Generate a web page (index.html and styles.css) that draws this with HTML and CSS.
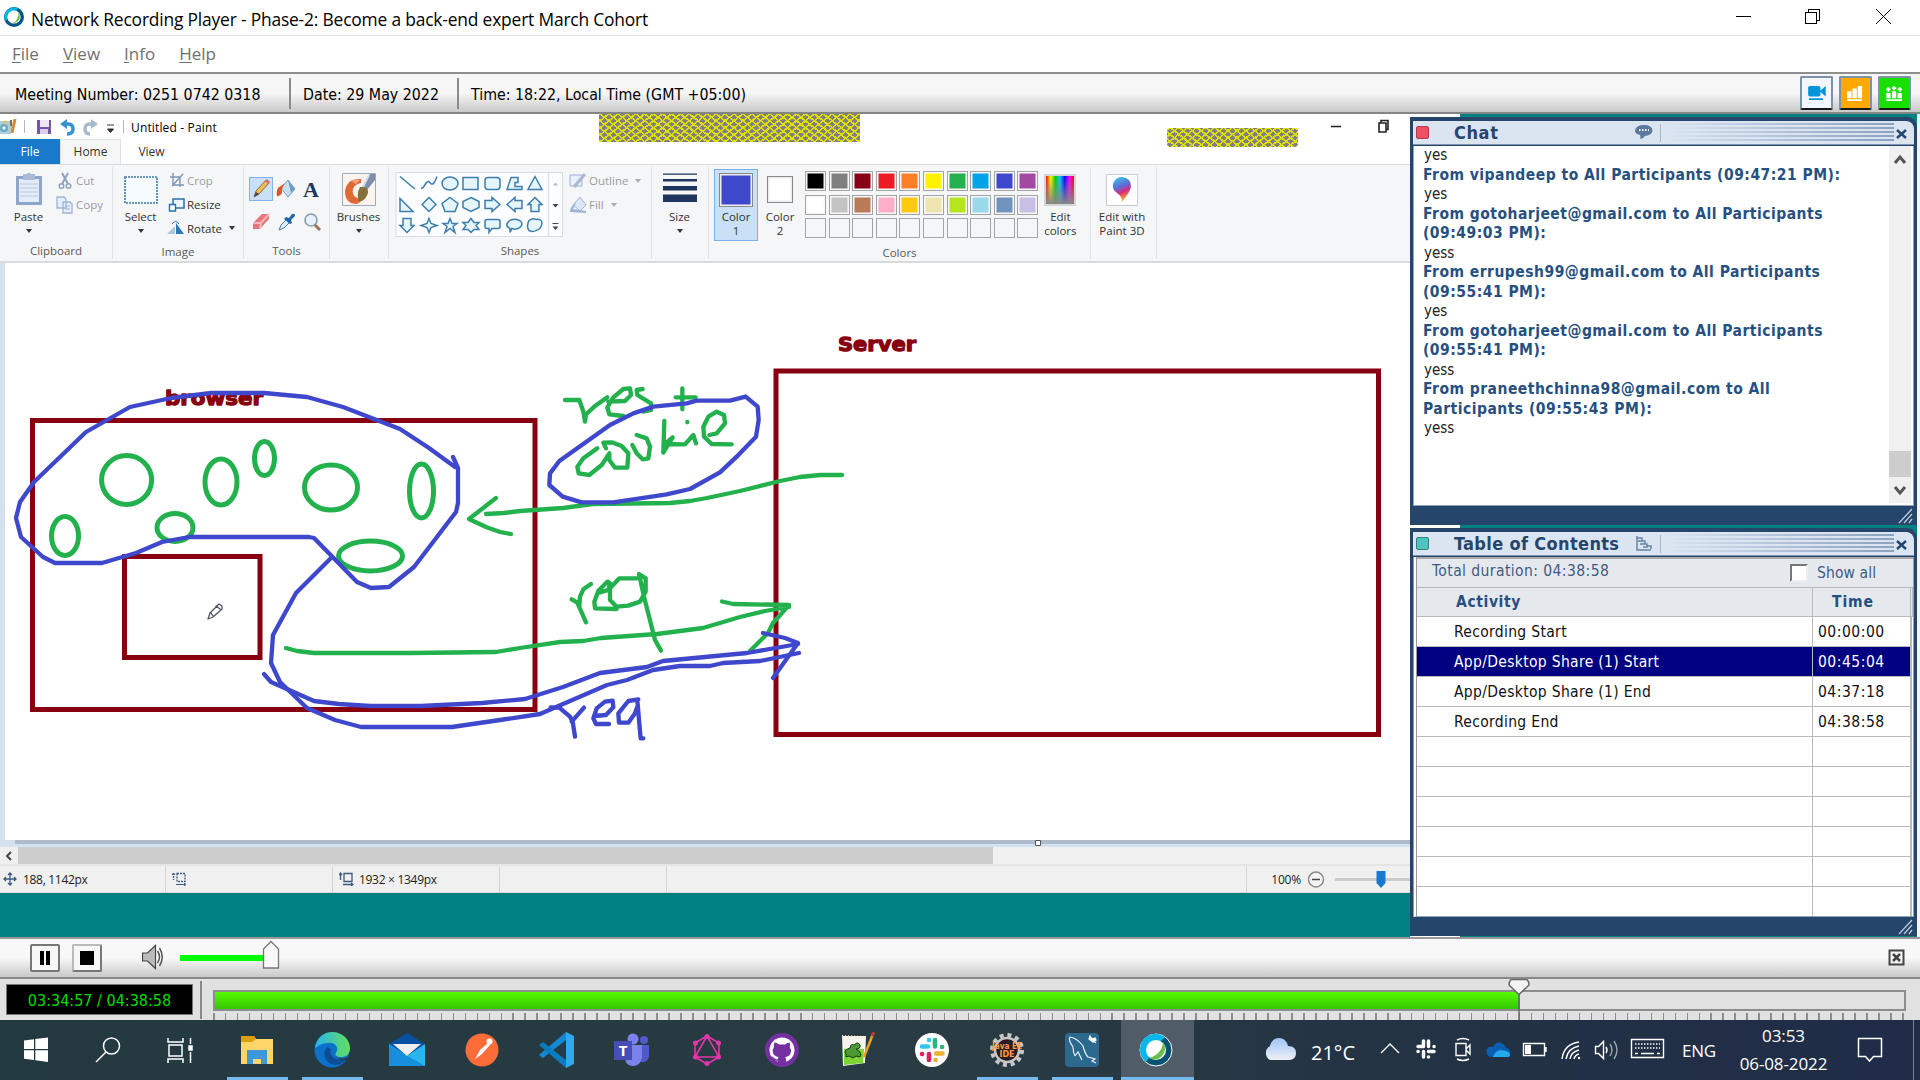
FILE: index.html
```html
<!DOCTYPE html>
<html lang="en">
<head>
<meta charset="utf-8">
<title>Network Recording Player</title>
<link rel="stylesheet" href="styles.css">
</head>
<body>
<header class="titlebar">
  <svg class="app-icon" width="22" height="22" viewBox="0 0 22 22"><circle cx="11" cy="11" r="10" fill="#07568a"/><path d="M2 15A10 10 0 0 1 15 2l-3 6z" fill="#00b6e3"/><circle cx="11" cy="11" r="6.6" fill="#fff"/><path d="M15.5 6c3 4 1 11-6 11.500c4-2 6-6 6-11.500z" fill="#6abf4b"/></svg>
  <span class="title">Network Recording Player - Phase-2: Become a back-end expert March Cohort</span>
  <svg class="win-buttons" width="184" height="35" viewBox="1736 0 184 35" fill="none" stroke="#000" shape-rendering="crispEdges"><path d="M1736 16.500h15M1805.500 12.500h11v11h-11zM1808.500 12v-2.500h11v11h-3"/><path d="M1876 9l15 15M1891 9l-15 15" shape-rendering="auto"/></svg>
</header>
<nav class="menu"><span><u>F</u>ile</span><span><u>V</u>iew</span><span><u>I</u>nfo</span><span><u>H</u>elp</span></nav>
<div class="infobar">
  <span class="info i1">Meeting Number: 0251 0742 0318</span>
  <span class="info i2">Date: 29 May 2022</span>
  <span class="info i3">Time: 18:22, Local Time (GMT +05:00)</span>
  <div class="panel-toggles">
    <svg class="tog cam" width="33" height="34" viewBox="0 0 33 34"><rect x="7" y="9" width="14" height="12" rx="2" fill="#0095d9"/><path d="M20 15l7-6v12zM8 23h16v2H8z" fill="#0095d9"/></svg>
    <svg class="tog bars" width="33" height="34" viewBox="0 0 33 34"><path d="M7 15h5v8H7zM13 12h5v11h-5zM19 9h5v14h-5zM7 24h17v2H7z" fill="#fff"/></svg>
    <svg class="tog people" width="33" height="34" viewBox="0 0 33 34"><path d="M7 17h5v6H7zM13.500 15h5v8h-5zM20 17h5v6h-5zM7 24h18v2H7zM7 12h5v2H7zM8.500 10.500h2v5h-2zM13.500 10.500h5v2h-5zM15 9h2v5h-2zM20 12h5v2h-5zM21.500 10.500h2v5h-2z" fill="#fff"/></svg>
  </div>
</div>

<main class="work">
  <section class="paint">
    <div class="ptitle">
      <svg width="126" height="25" viewBox="0 114 126 25" class="quick">
        <path d="M0 121h10l3 5-2 8H0z" fill="#a9cfdf"/><circle cx="4" cy="128" r="4" fill="#67a8bd"/><circle cx="4" cy="128" r="1.800" fill="#e4f1f5"/><circle cx="5" cy="122.500" r="2" fill="#d4c86a"/><path d="M15 119l-3 14" stroke="#d18b3c" stroke-width="3"/><path d="M11 120v6" stroke="#8a6a4a" stroke-width="2"/>
        <path d="M24.500 120v13M123.500 120v13" stroke="#b8b8b8"/>
        <path d="M37 120h14v14H37z" fill="#7357a5"/><path d="M40 120h9v7h-9z" fill="#eee6f6"/><path d="M40 129h8v5h-8z" fill="#d9cfe8"/>
        <path d="M64 124h4q5 0 5 5t-6 5" fill="none" stroke="#3793cf" stroke-width="3.500"/><path d="M60 124l7-5v10z" fill="#3793cf"/>
        <path d="M94 124h-4q-5 0-5 5t5 5" fill="none" stroke="#a8bacb" stroke-width="3.500"/><path d="M98 124l-7-5v10z" fill="#a8bacb"/>
        <path d="M107 125h7M107.500 129h6l-3 3.500z" fill="#333" stroke="#333" stroke-width="1"/>
      </svg>
      <span class="pname">Untitled - Paint</span>
      <svg class="pwin" width="60" height="20" viewBox="1331 116 60 20" fill="none" stroke="#222" stroke-width="1.600"><path d="M1331 125.500h10M1379 122h7v9h-7zM1381 122v-2.500h7v9h-2"/></svg>
      <i class="hatch big-hatch"></i><i class="hatch small-hatch"></i>
    </div>
    <div class="tabs"><span class="tab file">File</span><span class="tab home">Home</span><span class="tab">View</span></div>
    <div class="ribbon">
      <div class="group g-clip">
        <div class="gbody">
          <div class="big w56"><svg width="28" height="36" viewBox="0 0 28 36"><path d="M1 4h26v29H1z" fill="#8ea6cb"/><path d="M4 7h20v23H4z" fill="#e3ecf8"/><path d="M8 2h4q2-3 4 0h4v6H8z" fill="#a9bbd6"/><path d="M5 12h18M5 16h18M5 20h18M5 24h18" stroke="#b9cbe4"/></svg><b>Paste</b><em></em></div>
          <div class="lines">
            <span class="off"><svg width="20" height="18" viewBox="0 0 20 18"><path d="M6 1l6 11M12 1L6 12" stroke="#8fa3bf" stroke-width="2"/><circle cx="5.500" cy="14" r="2.300" fill="none" stroke="#8fa3bf" stroke-width="1.500"/><circle cx="12.500" cy="14" r="2.300" fill="none" stroke="#8fa3bf" stroke-width="1.500"/></svg>Cut</span>
            <span class="off"><svg width="20" height="18" viewBox="0 0 20 18"><path d="M1 1h7l2 2v9H1zM7 6h7l2 2v9H7z" fill="#e6eefa" stroke="#9db4d6" stroke-width="1.300"/><path d="M9 10h5M9 13h5" stroke="#9db4d6"/></svg>Copy</span>
          </div>
        </div>
        <div class="gname">Clipboard</div>
      </div>
      <div class="group g-image">
        <div class="gbody">
          <div class="big w54"><svg width="34" height="36" viewBox="0 0 34 36"><path d="M1 5h32v26H1z" fill="#f6fbff" stroke="#3678ad" stroke-width="1.600" stroke-dasharray="2 1"/></svg><b>Select</b><em></em></div>
          <div class="lines">
            <span class="off"><svg width="20" height="18" viewBox="0 0 20 18"><path d="M6 1v12h11M3 5h10v10M5 14L16 2" fill="none" stroke="#7f97b5" stroke-width="1.400"/></svg>Crop</span>
            <span><svg width="20" height="18" viewBox="0 0 20 18"><path d="M6 3h11v9H6z" fill="#e9f4fd" stroke="#2b6fae" stroke-width="1.500"/><path d="M2.500 8.500h6V15h-6z" fill="#fff" stroke="#2b6fae" stroke-width="1.400"/></svg>Resize</span>
            <span><svg width="20" height="18" viewBox="0 0 20 18"><path d="M9 15V4l8 11z" fill="#2c79bd"/><path d="M8 15V7L0 15z" fill="#a9c7df"/><path d="M5 5q4-5 7 0" fill="none" stroke="#2c79bd"/></svg>Rotate<em class="side"></em></span>
          </div>
        </div>
        <div class="gname">Image</div>
      </div>
      <div class="group g-tools">
        <div class="gbody tools">
          <svg width="24" height="24" viewBox="0 0 24 24" class="on"><path d="M5 20l2-6L17 3l3 3L10 17z" fill="#f0bd58" stroke="#8d6a34"/><path d="M5 20l2-5 3 2z" fill="#444"/><path d="M16 4l2-2 3 3-2 2z" fill="#d66f70"/></svg>
          <svg width="24" height="24" viewBox="0 0 24 24"><path d="M6 11l7-8 7 9-7 8z" fill="#c6e0f2" stroke="#7d9fbc"/><path d="M13 3l7 9-4 4z" fill="#6d9cc4"/><path d="M2 19q-1-5 1-8l7-5q-4 6-3 10-2 4-5 3z" fill="#d5562f"/></svg>
          <b class="serifA">A</b>
          <svg width="24" height="24" viewBox="0 0 24 24"><path d="M4 13L13 4h7v5l-9 10H4z" fill="#e2777e"/><path d="M4 13h8l8-9M12 13l-1 6" stroke="#f6b7ba" stroke-width="2" fill="none"/></svg>
          <svg width="24" height="24" viewBox="0 0 24 24"><path d="M4 20l2-5 7-7 3 3-7 7z" fill="#d7ebf8" stroke="#557da0"/><path d="M11 7l3 1 3-4q3-1 3 2l-4 4 1 3-2 1-6-5z" fill="#1e67a8"/></svg>
          <svg width="24" height="24" viewBox="0 0 24 24"><circle cx="10" cy="10" r="6" fill="#e6f2fb" stroke="#8d9aaa" stroke-width="1.600"/><path d="M14 15l5 5" stroke="#9c7155" stroke-width="3"/></svg>
        </div>
        <div class="gname">Tools</div>
      </div>
      <div class="group g-brush">
        <div class="gbody"><div class="big w57"><svg width="34" height="36" viewBox="0 0 34 36"><path d="M.5 1.500h33v32H.5z" fill="#fcf5ef" stroke="#9facba"/><path d="M19 7Q5 6 3 19q0 13 12 13l7-5q-13 0-11-10 2-5 8-6z" fill="#e06a32"/><path d="M9 9q6-3 9-1l-4 4z" fill="#f2a27c"/><path d="M28 2h5v6L25 18l-5-3z" fill="#7d8ead"/><path d="M27 3L21 15" stroke="#d5deeb" stroke-width="2"/><path d="M18 15q9-1 8 6-2 7-9 9-3-8 1-15z" fill="#85703c"/></svg><b>Brushes</b><em></em></div></div>
      </div>
      <div class="group g-shapes">
        <div class="gbody">
          <svg class="shapes" width="168" height="65" viewBox="395 171.500 168 65" fill="#e5f5fc" stroke="#3d7eaa" stroke-width="1.500">
            <path d="M396 172h166.500v64H396z" fill="#fcfdff" stroke="#d7dce2" stroke-width="1"/><path d="M548.500 172v64" stroke="#dce1e8"/>
            <path d="M400 176l15 12.500" /><path d="M421 188c4 0 4-8 8-7 4 6 6 0 8-5" fill="none"/><ellipse cx="450" cy="183" rx="8" ry="6.500"/><path d="M463 177h15v12h-15z"/><rect x="485" y="177" width="15" height="12" rx="3"/><path d="M507 189l4-12h7v5h-3v4h7v3z"/><path d="M535 176l7 13h-14z"/>
            <path d="M400 198v13h13z"/><path d="M429 197l7 7-7 7-7-7z"/><path d="M450 197l8 6-3 8h-10l-3-8z"/><path d="M471 197l8 4v6l-8 4-8-4v-6z"/><path d="M485 200h7v-3l8 7-8 7v-3h-7z"/><path d="M522 200h-7v-3l-8 7 8 7v-3h7z"/><path d="M535 197l7 7h-3v7h-8v-7h-3z"/>
            <path d="M403 218h8v7h3l-7 7-7-7h3z"/><path d="M429 218l2 5 6 2-6 2-2 5-2-5-6-2 6-2z"/><path d="M450 218l2 5h5l-4 3 2 6-5-4-5 4 2-6-4-3h5z"/><path d="M471 218l3 4h5l-3 3 3 4h-5l-3 3-3-3h-5l3-4-3-3h5z"/><path d="M487 219h11q2 0 2 2v5q0 2-2 2h-6l-3 4v-4h-2q-2 0-2-2v-5q0-2 2-2z"/><path d="M507 223q3-5 10-4 7 2 4 7-4 4-9 2l-2 4v-4q-4-2-3-5z"/><path d="M529 220q4-3 7-1 6-1 6 4-1 6-6 7-3 2-7 0-3-4 0-10z"/>
            <path d="M553 185l2.500-3 2.500 3z" fill="#bbb" stroke="none"/><path d="M552.500 203.500h6l-3 3.500z" fill="#444" stroke="none"/><path d="M552.500 223h6" stroke="#444" stroke-width="1"/><path d="M552.500 226h6l-3 3.500z" fill="#444" stroke="none"/>
          </svg>
          <div class="lines">
            <span class="off"><svg width="20" height="18" viewBox="0 0 20 18"><path d="M1 3h12v11H1z" fill="#e9effa" stroke="#9db2d3"/><path d="M5 15L16 2" stroke="#a9b9d1" stroke-width="3"/></svg>Outline<em class="side"></em></span>
            <span class="off"><svg width="20" height="18" viewBox="0 0 20 18"><path d="M4 9l7-8 6 8-6 6z" fill="#dce7f5" stroke="#a2b5d3"/><path d="M1 16q0-6 6-9l-3 6 13 2v2z" fill="#9fb2d8"/></svg>Fill<em class="side"></em></span>
          </div>
        </div>
        <div class="gname">Shapes</div>
      </div>
      <div class="group g-size">
        <div class="gbody"><div class="big w54"><svg width="34" height="36" viewBox="0 0 34 36"><path d="M0 1.500h34v1.200H0zM0 7h34v2.500H0zM0 14h34v4.500H0zM0 22.500h34v7.500H0z" fill="#1e365d"/></svg><b>Size</b><em></em></div></div>
      </div>
      <div class="group g-colors">
        <div class="gbody">
          <div class="big color1"><i class="sw s1"></i><b>Color</b><b>1</b></div>
          <div class="big color2"><i class="sw s2"></i><b>Color</b><b>2</b></div>
          <div class="palette">
            <i style="background:#000"></i><i style="background:#7f7f7f"></i><i style="background:#880015"></i><i style="background:#ed1c24"></i><i style="background:#ff7f27"></i><i style="background:#fff200"></i><i style="background:#22b14c"></i><i style="background:#00a2e8"></i><i style="background:#3f48cc"></i><i style="background:#a349a4"></i>
            <i style="background:#fff"></i><i style="background:#c3c3c3"></i><i style="background:#b97a57"></i><i style="background:#ffaec9"></i><i style="background:#ffc90e"></i><i style="background:#efe4b0"></i><i style="background:#b5e61d"></i><i style="background:#99d9ea"></i><i style="background:#7092be"></i><i style="background:#c8bfe7"></i>
            <i></i><i></i><i></i><i></i><i></i><i></i><i></i><i></i><i></i><i></i>
          </div>
          <div class="big editc"><i class="spectrum"></i><b>Edit</b><b>colors</b></div>
        </div>
        <div class="gname">Colors</div>
      </div>
      <div class="group g-3d">
        <div class="gbody"><div class="big w64"><svg width="32" height="36" viewBox="0 0 32 36"><defs><linearGradient id="p3" x1="0" y1="0" x2=".3" y2="1"><stop offset="0" stop-color="#37d1ea"/><stop offset=".45" stop-color="#5b6fd8"/><stop offset=".7" stop-color="#d52c7c"/><stop offset="1" stop-color="#ffb02e"/></linearGradient></defs><path d="M.5 2.500h31v31H.5z" fill="#fff" stroke="#c9cbd0"/><path d="M16 5q9 1 9 9 0 5-9 16 0-6-5-9-5-3-4-9 2-7 9-7z" fill="url(#p3)"/></svg><b>Edit with</b><b>Paint 3D</b></div></div>
      </div>
    </div>
    <svg class="canvas" width="1410" height="584" viewBox="0 263 1410 584" fill="none" stroke-linecap="round" stroke-linejoin="round">
      <path d="M0 263h5v584H0zM5 840h1405v7H5z" fill="#d5e1ef"/><path d="M15 840h1395v4H15z" fill="#aebbcd"/>
      <g fill="#88000f" font-family="'DejaVu Sans',sans-serif" font-weight="bold" font-size="20" stroke="#88000f" stroke-width="1.300"><text x="165" y="405" textLength="98" lengthAdjust="spacingAndGlyphs">browser</text><text x="838" y="351" textLength="78" lengthAdjust="spacingAndGlyphs">Server</text></g>
      <g stroke="#88000f" stroke-width="5" stroke-linejoin="miter"><path d="M32.500 420.500H535v289H32.500zM124.500 556.500H260v101H124.500zM776 371h602.500v363.500H776z"/></g>
      <g stroke="#22b14c" stroke-width="5"><ellipse cx="126.600" cy="480" rx="25" ry="24.500"/><ellipse cx="221" cy="482" rx="16" ry="23"/><ellipse cx="264.500" cy="458.500" rx="10" ry="17"/><ellipse cx="331" cy="487.500" rx="26.500" ry="22.500"/><ellipse cx="421.500" cy="491" rx="12" ry="27"/><ellipse cx="65" cy="536" rx="13.500" ry="19.500"/><ellipse cx="175" cy="527.500" rx="18" ry="14"/><ellipse cx="370.500" cy="556" rx="32" ry="15"/></g>
      <g stroke="#22b14c" stroke-width="4.300"><path d="M496 498L469 519 486 527 500 532 511 534M486 514L504 513 520 511 563 508 593 504 670 503 690 501 707 498 740 491 780 481 800 477 820 475 842 475"/><path d="M286 648L297 651 314 653H411L496 652 520 648 560 642 583 641 601 638 657 634 703 628 740 617 765 611 789 607M722 601.500L733 604 789 605 773 623 768 633 750 651"/></g>
      <g transform="translate(520 320) scale(.33333)" stroke="#22b14c" stroke-width="13">
        <path d="M135 240H178L190 275 195 305 198 283 225 258 262 232M265 245L315 243 333 225 330 205 310 207 280 232 262 262 268 283 310 288M368 207L350 210 352 225 393 250 393 270 370 275M487 205V268M467 232H527"/>
        <path d="M232 385L190 415 172 440 176 460 208 465 245 435 268 400V420L285 443H322L325 400 305 378 275 367 250 368 258 385M337 375L350 400 368 418 385 415 390 380 380 355 350 345M433 303L430 398 458 352 435 372 495 373 520 345 528 370M502 306v1M568 345L590 340 615 310 612 285 590 275 565 290 550 320 552 350 575 372 635 373"/>
        <path d="M155 838L172 848 198 907M178 858L180 830 190 808 213 792M237 818L265 810 270 790 262 785 235 812 223 845 225 865 290 867M350 775H298L270 805V840L290 860 325 857 360 845 377 815V775L357 762 372 830 405 960 423 992"/>
      </g>
      <g stroke="#3f48cc" stroke-width="4.300"><path d="M453 457L458 468V503L456 512 414 567 389 587 371 588 357 582 337.500 562 314 538 309 537H189L162 542 136 553 102 563H55L43 557 21 537 16 518 20 502 34 482 86 432 130 407 171 398 211 393H264L307 397 343 407 400 429 429 448 455 467"/><path d="M330 559L296 593 273 635 271 663 280 682 307 708 335 720 361 727H452L500 720 540 714 607 685 627 680 653 670 680 666H710L723 663 760 661 799 653"/><path d="M264 674L271 682 314 701 339 704 370 706 421 706 482 703 525 699 563 687 600 673 647 667 663 661 747 653 798 644M763 633L785 638 798 643 773 678"/></g>
      <g transform="translate(520 320) scale(.33333)" stroke="#3f48cc" stroke-width="13"><path d="M677 230L630 242H530L500 250 400 260 340 280 270 315 118 423 90 460 88 495 128 530 185 547H280L440 523 510 507 600 457 650 410 708 350 716 300 713 260 677 230"/><path d="M92 1162L118 1163 150 1190 158 1205 165 1250M155 1205L192 1163M222 1188L258 1185 280 1162 278 1142 255 1145 230 1165 220 1195 228 1212 267 1212M355 1138L325 1143 295 1180 297 1208 325 1208 345 1180 352 1160M352 1140L357 1200 362 1255h8"/></g>
      <path d="M208 619l2-6 9-9 3 2v3l-9 8zM216 606l4 3M211 613l2 3" fill="#fff" stroke="#4d5360" stroke-width="1.300"/>
      <path d="M1035.500 840.500h5v5h-5z" fill="#fff" stroke="#555" stroke-linecap="butt" stroke-linejoin="miter"/>
    </svg>
    <div class="hscroll"><svg width="18" height="17" viewBox="0 0 18 17"><path d="M11 5L7 9l4 4" fill="none" stroke="#444" stroke-width="2"/></svg><i></i></div>
    <div class="status">
      <span class="st a"><svg width="21" height="14" viewBox="0 0 21 14"><path d="M10 1v12M4 7h12M8 3l2-2 2 2M8 11l2 2 2-2M6 5L4 7l2 2M14 5l2 2-2 2" fill="none" stroke="#3d5a80" stroke-width="1.300"/></svg>188, 1142px</span>
      <span class="st b"><svg width="16" height="14" viewBox="0 0 16 14"><path d="M1.500 1v7M5 1.500h8v8H5z" fill="none" stroke="#3d5a80" stroke-width="1.300" stroke-dasharray="2 1"/><path d="M0 3l1.500-2L3 3M4 12.500h10M12 11l2 1.500-2 1.500" fill="none" stroke="#3d5a80"/></svg></span>
      <span class="st c"><svg width="18" height="14" viewBox="0 0 18 14"><path d="M1.500 1v7M5 1.500h8v8H5zM0 3l1.500-2L3 3M4 12.500h10M12 11l2 1.500-2 1.500" fill="none" stroke="#3d5a80" stroke-width="1.300"/></svg>1932 × 1349px</span>
      <span class="st d"></span><span class="st e"></span>
      <span class="zoom">100%<svg width="102" height="26" viewBox="1308 866 102 26"><circle cx="1316" cy="879.500" r="7.500" fill="#f3f3f3" stroke="#8b8b8b" stroke-width="1.500"/><path d="M1312 879.500h8" stroke="#444" stroke-width="1.500"/><path d="M1335 879.500h75" stroke="#ccc" stroke-width="3"/><path d="M1376.500 871h9v12l-4.500 5-4.500-5z" fill="#1979ca"/></svg></span>
    </div>
    <div class="desk"></div>
  </section>
  <aside class="side-col">
    <section class="panel chat">
      <div class="phead"><i class="dot red"></i><h2>Chat</h2><svg width="26" height="18" viewBox="0 0 26 18"><path d="M9 1q8 0 8.500 5.500Q17 11 10 12q-2 3-5 3 1-2 0-4-5-1-5-4.500Q1 1 9 1z" fill="#5d7a9e"/><path d="M4 6h10" stroke="#fff" stroke-width="2" stroke-dasharray="1.500 1.500"/><path d="M25.500 0v18" stroke="#a9b6c8"/></svg><i class="grip"></i><svg width="20" height="22" viewBox="0 0 20 22"><path d="M3 8l9 8M12 8l-9 8" stroke="#26456b" stroke-width="2.400"/></svg></div>
      <div class="pbody chatbody">
        <div class="msgs">
          <p>yes</p><p class="who">From vipandeep to All Participants (09:47:21 PM):</p><p>yes</p><p class="who">From gotoharjeet@gmail.com to All Participants<br>(09:49:03 PM):</p><p>yess</p><p class="who">From errupesh99@gmail.com to All Participants<br>(09:55:41 PM):</p><p>yes</p><p class="who">From gotoharjeet@gmail.com to All Participants<br>(09:55:41 PM):</p><p>yess</p><p class="who">From praneethchinna98@gmail.com to All<br>Participants (09:55:43 PM):</p><p>yess</p>
        </div>
        <div class="vscroll"><svg width="22" height="26" viewBox="0 0 22 26"><path d="M6 17l5-6 5 6" fill="none" stroke="#555" stroke-width="3"/></svg><i></i><svg width="22" height="26" viewBox="0 0 22 26"><path d="M6 10l5 6 5-6" fill="none" stroke="#555" stroke-width="3"/></svg></div>
      </div>
      <div class="pfoot"><svg width="16" height="16" viewBox="0 0 16 16"><path d="M1 15L14 1M6 15l8-9M11 15l3-4" stroke="#b9c8da" stroke-width="1.300"/></svg></div>
    </section>
    <section class="panel toc">
      <div class="phead"><i class="dot teal"></i><h2>Table of Contents</h2><svg width="26" height="18" viewBox="0 0 26 18"><path d="M2 1v14h14M2 3h5v3H3M6 6h4v3H5M9 9h3v3H8M12 11h4v3" fill="none" stroke="#6884a5" stroke-width="1.500"/><path d="M25.500 0v18" stroke="#a9b6c8"/></svg><i class="grip"></i><svg width="20" height="22" viewBox="0 0 20 22"><path d="M3 8l9 8M12 8l-9 8" stroke="#26456b" stroke-width="2.400"/></svg></div>
      <div class="pbody tocbody">
        <div class="total"><span class="dur">Total duration: 04:38:58</span><i class="check"></i><span class="all">Show all</span></div>
        <div class="row hd"><span>Activity</span><span>Time</span></div>
        <div class="row"><span>Recording Start</span><span>00:00:00</span></div>
        <div class="row sel"><span>App/Desktop Share (1) Start</span><span>00:45:04</span></div>
        <div class="row"><span>App/Desktop Share (1) End</span><span>04:37:18</span></div>
        <div class="row"><span>Recording End</span><span>04:38:58</span></div>
        <div class="row"><span></span><span></span></div><div class="row"><span></span><span></span></div><div class="row"><span></span><span></span></div><div class="row"><span></span><span></span></div><div class="row"><span></span><span></span></div><div class="row last"><span></span><span></span></div>
      </div>
      <div class="pfoot"><svg width="16" height="16" viewBox="0 0 16 16"><path d="M1 15L14 1M6 15l8-9M11 15l3-4" stroke="#b9c8da" stroke-width="1.300"/></svg></div>
    </section>
  </aside>
</main>

<div class="controls">
  <i class="btn pause"><svg width="14" height="14"><path d="M2 0h4v14H2zM8 0h4v14H8z"/></svg></i>
  <i class="btn stop"><svg width="14" height="14"><path d="M0 0h14v14H0z"/></svg></i>
  <svg class="vol" width="140" height="36" viewBox="142 940 140 36"><path d="M142.500 953h5l8-7.500v23l-8-7.500h-5z" fill="#bbb" stroke="#444" stroke-width="1.200"/><path d="M157.500 951q4 6 0 12M159.500 948q5.500 9 0 18" fill="none" stroke="#555" stroke-width="1.500"/><path d="M180 955h84v6h-84z" fill="#0f0"/><path d="M263.500 968v-19l7.500-7.500 7.500 7.500v19z" fill="#f8f8f8" stroke="#777" stroke-width="1.300"/></svg>
  <svg class="cclose" width="17" height="17" viewBox="0 0 17 17"><path d="M1.500 1.500h14v14h-14z" fill="none" stroke="#444" stroke-width="2"/><path d="M5 5l7 7M12 5l-7 7" stroke="#444" stroke-width="2.600"/></svg>
</div>
<div class="seek">
  <div class="clock">03:34:57 / 04:38:58</div>
  <i class="sep"></i>
  <div class="track"><div class="rail"><i class="fill"></i></div><i class="ticks"></i>
    <svg class="knob" width="24" height="41" viewBox="1507 979 24 41"><path d="M1511 979.500h16q3 4 1.500 6L1519 994.500l-9.500-9q-1.500-2 1.500-6z" fill="#f4f4f4" stroke="#666" stroke-width="1.500"/><path d="M1519 994v26" stroke="#666" stroke-width="1.500"/></svg></div>
</div>

<footer class="taskbar">
  <div class="sys">
    <svg width="72" height="60" viewBox="0 0 72 60"><path d="M24 20.500l10-1.300v9.800H24zM35.300 19L48 17.500V29H35.300zM24 30.300h10V40l-10-1.300zM35.300 30.300H48V42l-12.700-1.700z" fill="#fff"/></svg>
    <svg width="72" height="60" viewBox="0 0 72 60" fill="none" stroke="#fff" stroke-width="1.500"><circle cx="39.500" cy="26" r="8"/><path d="M34 32L24 42"/></svg>
    <svg width="75" height="60" viewBox="0 0 75 60" fill="none" stroke="#fff" stroke-width="1.500"><path d="M25 25h13v11H25zM24 18v4h15v-4M24 43v-4h15v4M46.500 18v6M46.500 32v11"/><path d="M45 26h3v4h-3z" fill="#fff"/></svg>
  </div>
  <div class="apps">
    <span class="run"><svg width="36" height="36" viewBox="0 0 36 36"><path d="M2 4h13l2 3h17v25H2z" fill="#ffd568"/><path d="M2 4h13l2 3-4 3H2z" fill="#dc9f0c"/><path d="M8 18h20v14h-6v-5h-8v5H8z" fill="#3e96dc"/></svg></span>
    <span class="run"><svg width="36" height="36" viewBox="0 0 36 36"><defs><linearGradient id="eg"><stop stop-color="#28b2ec"/><stop offset="1" stop-color="#63df5f"/></linearGradient></defs><circle cx="18" cy="18" r="17.500" fill="#0c72c9"/><path d="M1 16C2 6 10 0 18 0c11 0 18 8 18 16 0 7-5 9-9 9-4 0-7-2-5-4 4-6-2-11-8-10C8 11 4 14 1 16z" fill="url(#eg)"/><path d="M13 15q-6 8 1 15 8 7 18-2-6 1-12-2-5-4-3-9z" fill="#0e4c93"/><path d="M22 25q5 3 12 0l2 2-3 1q-7 1-11-3z" fill="#253a44"/></svg></span>
    <span><svg width="36" height="36" viewBox="0 0 36 36"><path d="M0 12L18 1l18 11v10H0z" fill="#0850a2"/><path d="M0 12l18 12 18-12v22H0z" fill="#29b5ed"/><path d="M0 12l17 11 19 11H0z" fill="#168fdf"/><path d="M4 12h28L18 24z" fill="#eee"/></svg></span>
    <span><svg width="36" height="36" viewBox="0 0 36 36"><circle cx="18" cy="18" r="16.500" fill="#ff6c37"/><path d="M11 27l5-9 8-7 2 2-8 9z" fill="#fff"/><circle cx="25.500" cy="9.500" r="3" fill="#fff"/></svg></span>
    <span><svg width="36" height="36" viewBox="0 0 36 36"><path d="M27 0v8L4 26l-4-3z" fill="#1489d1"/><path d="M0 13l4-3 23 18v8z" fill="#087bc1"/><path d="M27 0l8 4v28l-8 4z" fill="#2fa9f1"/></svg></span>
    <span><svg width="36" height="36" viewBox="0 0 36 36"><circle cx="19" cy="7" r="5.500" fill="#7b83eb"/><circle cx="30" cy="8" r="4" fill="#5059c9"/><path d="M25 13h10v12q-2 6-8 5z" fill="#5059c9"/><path d="M11 13h17v13q-2 8-9 8t-8-7z" fill="#7b83eb"/><path d="M0 9h18v19H0z" fill="#464eb8"/><text x="9" y="24" text-anchor="middle" font-family="'Open Sans',sans-serif" font-weight="bold" font-size="15" fill="#fff">T</text></svg></span>
    <span><svg width="36" height="36" viewBox="0 0 36 36"><path d="M18 4l12 7v14l-12 7-12-7V11zM18 4L6 25h24z" fill="none" stroke="#e535ab" stroke-width="1.600"/><g fill="#e535ab"><circle cx="18" cy="4.500" r="2.500"/><circle cx="29.500" cy="11" r="2.500"/><circle cx="29.500" cy="25" r="2.500"/><circle cx="18" cy="31.500" r="2.500"/><circle cx="6.500" cy="25" r="2.500"/><circle cx="6.500" cy="11" r="2.500"/></g></svg></span>
    <span><svg width="36" height="36" viewBox="0 0 36 36"><circle cx="18" cy="18" r="17" fill="#7430a0"/><circle cx="18" cy="18" r="12.500" fill="#fff"/><path d="M10.500 10.500q2 0 4.500 2h6q2.500-2 4.500-2 1 2.500.2 4.500 2 2.500 1 6-1 3.500-5.500 4 1 1.500 1 3.500v3h-8.400v-3q-4 1-5.500-2.500-.7-1-1.500-1.500 2-.5 3 1.200 1.500 2 4 1.300 0-1.300.8-2-4.600-.8-5.600-4-1-3.500 1-6-.7-2 .5-4.500z" fill="#7430a0"/></svg></span>
    <span><svg width="36" height="36" viewBox="0 0 36 36"><path d="M3 3l24 1-1 27-22 3z" fill="#f4f4ec"/><path d="M5 17h20l-1 14-19 2z" fill="#7fd435"/><path d="M7 22q-3-4 4-6 1-5 4-3 4-4 6 0 1 4-4 4 7 4 4 8l-4-1-3 2-4-2-3 1z" fill="#4b9a34" stroke="#163c12"/><path d="M4 3h22" stroke="#333" stroke-width="2" stroke-dasharray="2 1"/><path d="M34 2L25 25" stroke="#e8a020" stroke-width="2.500"/><path d="M35 0l-2 4" stroke="#b53b36" stroke-width="3"/></svg></span>
    <span><svg width="36" height="36" viewBox="0 0 36 36"><circle cx="18" cy="18" r="17" fill="#fff"/><g stroke-width="4.600" stroke-linecap="round"><path d="M8 14.500h6M15 8h.1" stroke="#36c5f0"/><path d="M21 8v6.500M28 15h.1" stroke="#2eb67d"/><path d="M22 21.500h6.500M21.500 28h.1" stroke="#ecb22e"/><path d="M15 22v6M8 22h.1" stroke="#e01e5a"/></g></svg></span>
    <span class="run"><svg width="36" height="36" viewBox="0 0 36 36"><circle cx="18" cy="18" r="15" fill="none" stroke="#c7c7c7" stroke-width="4" stroke-dasharray="4 3.850"/><circle cx="18" cy="18" r="12" fill="#281c26" stroke="#c7c7c7" stroke-width="2.500"/><g font-family="'DejaVu Sans',sans-serif" font-size="8" font-weight="bold" fill="#ff9a3d" text-anchor="middle"><text x="18" y="17" textLength="30" lengthAdjust="spacingAndGlyphs">Java EE</text><text x="18" y="25">IDE</text></g></svg></span>
    <span class="run"><svg width="36" height="36" viewBox="0 0 36 36"><rect x="1" y="1" width="34" height="34" rx="4" fill="#2b698f"/><path d="M11 24q-2-4-2-9Q4 8 6 5q7 1 13 9 2 8 5 11l7 2-3 2 4 2M11 24l3-4 4 8" fill="none" stroke="#e7f1f6" stroke-width="1.200"/><path d="M26 4l2 3 3-1 1 2-3 2-4-3zM29 8l3 3" stroke="#fff" stroke-width="1.200" fill="#fff"/></svg></span>
    <span class="run active"><svg width="36" height="36" viewBox="0 0 36 36"><circle cx="18" cy="18" r="16" fill="#075271" stroke="#fff"/><path d="M8 30A15.500 15.500 0 0 1 27 5l-5 5z" fill="#08b7ea"/><circle cx="18" cy="18" r="10" fill="#fff"/><path d="M25 10q5 8-2 15-5 5-12 1 13-4 14-16z" fill="#6abf4b"/></svg></span>
  </div>
  <svg class="weather" width="36" height="26" viewBox="0 0 36 26"><defs><linearGradient id="cl" x2="0" y2="1"><stop stop-color="#9fc3f5"/><stop offset="1" stop-color="#eef0f6"/></linearGradient></defs><path d="M8 24a8 8 0 0 1 0-14Q10 2 17 2t9 8q8 0 8 7t-7 7z" fill="url(#cl)"/></svg>
  <span class="temp">21°C</span>
  <svg class="tray" width="294" height="30" viewBox="1376 1036 294 30" fill="none" stroke="#fff" stroke-width="1.400">
    <path d="M1381 1054l9-9 9 9"/>
    <path d="M1423.500 1042v4M1418 1047.500h5.500M1428.500 1042v5.500M1434 1047.500h.1M1418 1052.500h.1M1423.500 1052.500v5.500M1428.500 1052.500h5.500M1428.500 1058v.1" stroke-width="3.500" stroke-linecap="round"/>
    <path d="M1456 1044.500h10v12h-10zM1466 1050l4-4v9l-4-4M1457 1041q6-3 12 0M1457 1060q6 3 12 0"/>
    <path d="M1490 1058q-5-3-3-8 2-3 6-2 4-7 10-3 3 2 3 4 5 1 4 6-1 3-4 3z" fill="#0a5fb5" stroke="none"/><path d="M1493 1058q2-6 8-7 9 1 9 5 0 2-3 2z" fill="#28a8ea" stroke="none"/>
    <path d="M1523.500 1044.500h21v12h-21zM1546 1048v5"/><path d="M1525 1046h6v9h-6z" fill="#fff" stroke="none"/>
    <path d="M1562 1060q2-15 17-17M1566 1060q2-11 13-13M1570 1060q1-7 9-9M1574 1060q1-4 5-5"/><circle cx="1579" cy="1059" r="1.200" fill="#fff" stroke="none"/>
    <path d="M1595.500 1047.500h3l5-5v17l-5-5h-3zM1606 1048q2 3 0 6"/><path d="M1610 1045q4 6 0 12M1614 1042q6 9 0 18" stroke="#9ba5ae"/>
    <path d="M1631.500 1040.500h32v18h-32z"/><path d="M1635 1045h25M1635 1049h25" stroke-dasharray="1.500 1.500"/><path d="M1635 1054.500h3M1641 1054.500h13M1657 1054.500h3"/>
  </svg>
  <span class="lang">ENG</span>
  <div class="datetime"><span>03:53</span><span>06-08-2022</span></div>
  <svg class="notif" width="26" height="26" viewBox="1857 1037 26 26"><path d="M1858.500 1038.500h23v18h-8l-4 4.500-4-4.500h-7z" fill="none" stroke="#fff" stroke-width="1.500"/></svg>
  <i class="peek"></i>
</footer>
</body>
</html>
```
FILE: styles.css
```css
*{box-sizing:border-box}
body{margin:0;width:1920px;height:1080px;overflow:hidden;display:flex;flex-direction:column;background:#fff;color:#000;font-family:"Open Sans","Noto Sans",sans-serif}
svg{display:block;flex:none}
i,em,b{font-style:normal;font-weight:normal}
h2,p{margin:0}
.titlebar{height:36px;border-bottom:1px solid #e3e3e3;display:flex;align-items:center;flex:none}
.app-icon{margin:-2px 0 0 3px}
.title{margin-left:6px;margin-top:2px;font-size:17.4px;letter-spacing:-.18px;white-space:nowrap}
.win-buttons{margin-left:auto}
.menu{height:36px;flex:none;display:flex;align-items:center;padding-left:12px;gap:24px;font-size:17px;color:#707070}
.menu span{margin-top:-1px}
.menu u{text-underline-offset:2px}
.infobar{height:42px;flex:none;border-top:2px solid #8f8f8f;border-bottom:2px solid #858585;background:linear-gradient(#f6f6f6 50%,#c9c9c9);display:flex;align-items:center;font-family:"DejaVu Sans Condensed","DejaVu Sans",sans-serif;font-size:15.8px}
.info{height:31px;line-height:33px;border-right:2px solid #8c8c8c;padding-left:15px;white-space:nowrap}
.i1{width:291px}
.i2{width:168px;padding-left:12px}
.i3{border:0;padding-left:12px}
.panel-toggles{margin-left:auto;margin-right:9px;display:flex;gap:6px}
.tog{border:2px solid #7c93ab;border-bottom-color:#181818;border-radius:2px;background:#f4f7ff}
.bars{background:#ffa800}
.people{background:#17e000}
.work{height:823px;flex:none;display:flex;background:#f4f4f4}
.paint{width:1410px;display:flex;flex-direction:column;background:#fff}
.ptitle{height:25px;display:flex;align-items:center;position:relative;font-size:12px}
.pname{margin-left:5px;margin-top:1px;letter-spacing:.15px}
.pwin{margin-left:auto;margin-right:19px}
.hatch{position:absolute;background:repeating-linear-gradient(38deg,#e0e000 0 1.600px,transparent 1.600px 5.500px),repeating-linear-gradient(-38deg,#e0e000 0 1.600px,transparent 1.600px 5.500px),#808080}
.big-hatch{left:599px;top:0;width:261px;height:28px}
.small-hatch{left:1167px;top:14px;width:131px;height:19px;border-radius:3px}
.tabs{height:25px;display:flex;font-size:12px;color:#333}
.tab{width:61px;line-height:26px;text-align:center}
.file{width:60px;background:#1979ca;color:#fff}
.home{background:#f5f6f7;border:1px solid #dfe1e3;border-bottom:0;line-height:24px}
.ribbon{height:99px;display:flex;background:#f5f6f7;border-top:1px solid #dadbdc;border-bottom:2px solid #d9dadb;font-size:11.5px;color:#333}
.group{display:flex;flex-direction:column;border-right:1px solid #e0e2e4;margin:2px 0}
.gbody{height:75px;display:flex;padding-top:5px}
.gname{text-align:center;line-height:16px;margin-top:4px;color:#5a5a5a}
.g-clip{width:113px}.g-image{width:131px}.g-tools{width:86px}.g-brush{width:59px}.g-shapes{width:263px}.g-size{width:57px}.g-colors{width:382px}.g-3d{width:66px}
.big{display:flex;flex-direction:column;align-items:center;line-height:14px;white-space:nowrap}
.big b{height:14px}
.big>svg{margin-bottom:2px}
em{display:block;border:3.5px solid transparent;border-top:4px solid #333;border-bottom:0;margin-top:5px}
.side{margin:0 0 0 7px}
.w56{width:56px;padding-left:1px}.w54{width:54px;padding-left:1px}.w57{width:57px}.w64{width:62px}
.lines{display:flex;flex-direction:column;margin-top:-3px}
.lines span{height:23.8px;display:flex;align-items:center;white-space:nowrap}
.off{color:#9a9ea3}
.off em{border-top-color:#aaa}
.tools{display:grid;grid-template-columns:26px 26px 22px;grid-template-rows:33px 24px;padding:10px 0 0 5px;justify-items:start}
.tools svg.on{background:#c9e0f7;box-shadow:0 0 0 1px #7fb4e8 inset}
.serifA{font:bold 22px/24px "Liberation Serif",serif;color:#1e365d;margin-left:2px;margin-top:1px}
.g-shapes .gbody{padding-left:6px}
.g-shapes .lines{margin-left:6px}
.color1{margin:-3px 0 0 5px;width:44px;height:72px;padding-top:3px;background:#c9e0f7;border:1px solid #7ab0e8}
.color2{width:40px;margin-left:2px;padding-top:3px}
.sw{border:1px solid #888;box-shadow:0 0 0 1.500px #eee inset}
.s1{width:34px;height:34px;background:#3f48cc;margin-bottom:3px}
.s2{width:26px;height:27px;background:#fff;margin:1px 0 7px}
.palette{display:grid;grid-template-columns:repeat(10,21px);grid-template-rows:repeat(3,20px);column-gap:2.6px;row-gap:3.500px;margin:-1px 0 0 5px}
.palette i{border:1px solid #a2a4a6;box-shadow:0 0 0 1.500px #f7f7f7 inset}
.editc{width:44px;margin-left:0}
.spectrum{width:32px;height:32px;margin:2px 0 4px;border:2px solid #d5d5d5;background:linear-gradient(transparent,#888),linear-gradient(90deg,red,#ff0,#0c0,#0cf,#00f,#f0f,red)}
.hscroll{height:17px;display:flex;background:#f0f0f0}
.hscroll i{width:975px;background:#cdcdcd}
.status{height:29px;border-top:2px solid #e5e5e5;border-bottom:1px solid #d9d9d9;background:#f0f0f0;display:flex;align-items:center;font-size:12px;color:#222}
.st{height:26px;border-right:1px solid #d4d4d4;display:flex;align-items:center;letter-spacing:-.3px;white-space:nowrap}
.a{width:166px}.b{width:167px;padding-left:6px}.c{width:167px;padding-left:6px}.d{width:167px}.e{width:580px}
.st svg{margin-right:2px}
.zoom{margin-left:auto;display:flex;align-items:center;gap:7px;letter-spacing:-.2px}
.desk{flex:1;background:#008080}
.side-col{width:507px;padding-top:3px;display:flex;flex-direction:column;gap:3px;background:linear-gradient(90deg,#fff 50px,#008080 50px)}
.panel{height:408px;background:#26456b;border-radius:0 10px 0 0;padding:4px 3px 0;display:flex;flex-direction:column;font-family:"DejaVu Sans Condensed","DejaVu Sans",sans-serif}
.phead{height:24px;flex:none;background:#dbe5f2;border-radius:0 8px 0 0;display:flex;align-items:center;border-bottom:1px solid #7f96b2;padding-left:3px}
.phead h2{font-size:18px;line-height:22px;color:#26456b;margin-left:25px;width:181px;white-space:nowrap;letter-spacing:.35px}
.chat h2{letter-spacing:.6px}
.dot{width:13px;height:13px;border-radius:2px;border:1px solid #b63a4b;background:#ef5064}
.teal{background:#52c3bc;border-color:#29827f}
.grip{flex:1;height:20px;margin-left:3px;background:linear-gradient(90deg,#dbe5f2,transparent),repeating-linear-gradient(#8ba1be 0 2px,#dbe5f2 2px 4px)}
.pbody{margin-top:1px;flex:1;background:#fff;border:1px solid #8fa3bc;border-top:0;overflow:hidden}
.chatbody{display:flex;padding:0 2px 2px 10px}
.msgs{flex:1;font-size:15px;line-height:19.5px;white-space:nowrap;color:#222}
.who{color:#26507f;font-weight:bold;font-size:15.5px;letter-spacing:.48px;margin-left:-1px}
.vscroll{width:22px;background:#f0f0f0;display:flex;flex-direction:column}
.vscroll i{height:26px;margin-top:auto;background:#cdcdcd}
.pfoot{height:19px;flex:none;display:flex;justify-content:flex-end;align-items:center}
.tocbody{border-left:4px double #999;font-size:15.5px;color:#111;letter-spacing:.32px}
.total{height:30px;background:#e5e9ee;border-top:2px solid #aaa;display:flex;align-items:center;color:#3f5b82}
.dur{margin-left:15px;margin-top:-4px;width:358px;letter-spacing:.42px}
.check{width:18px;height:18px;background:#fff;border:2px solid #777;border-right-color:#eee;border-bottom-color:#eee}
.all{margin-left:9px;margin-top:-1px;letter-spacing:.1px}
.row{height:30px;display:flex;border-bottom:1px solid #b9babd;border-right:1px solid #b9babd;width:495px}
.row span{line-height:31px;padding-left:37px;width:396px;border-right:1px solid #b9babd;white-space:nowrap}
.row span+span{padding-left:5px;width:98px;letter-spacing:.5px}
.row.hd{height:30px;background:#e5e9ee;border-top:1px solid #b9babd;font-weight:bold;color:#26507f;width:auto}
.row.hd span{line-height:29px;padding-left:39px;letter-spacing:.6px}
.row.hd span+span{padding-left:19px;letter-spacing:.9px}
.sel{background:#000080;color:#fff}
.controls{height:42px;flex:none;border-top:2px solid #999;border-bottom:2px solid #888;background:linear-gradient(#f8f8f8 50%,#c9c9c9);display:flex;align-items:center;padding-left:30px;padding-bottom:1px}
.btn{width:30px;height:28px;border:2px solid #777;border-radius:2px;background:#f7f7f7;display:flex;align-items:center;justify-content:center}
.stop{margin-left:12px;border-color:#bbb #777 #777 #bbb}
.vol{margin-left:40px}
.cclose{margin-left:auto;margin-right:15px}
.seek{height:41px;flex:none;background:#e1e1e1;display:flex;align-items:center}
.clock{margin-left:6px;width:187px;height:31px;background:#000;border:1px solid #777;color:#00dc00;font:16px/31px "DejaVu Sans Condensed","DejaVu Sans",sans-serif;text-align:center;white-space:nowrap}
.sep{width:2px;height:38px;margin-left:7px;background:#888}
.track{margin-left:11px;width:1693px;height:41px;position:relative;padding-top:11px;display:flex;flex-direction:column;gap:2px}
.rail{height:21px;border:2px solid #8d8d8d;flex:none}
.fill{display:block;width:1305px;height:17px;background:linear-gradient(#56fa00,#35c700)}
.ticks{height:7px;background:repeating-linear-gradient(90deg,#8c8c8c 0 1.500px,transparent 1.500px 11.98px)}
.knob{position:absolute;left:1294px;top:0}
.taskbar{height:60px;flex:none;background:linear-gradient(90deg,#233940,#293b43 50%,#233244 75%,#202c48);color:#fff;display:flex;align-items:center}
.sys{display:flex;width:219px}
.apps{display:flex;height:60px}
.apps span{width:75px;display:flex;align-items:center;justify-content:center;position:relative}
.apps .run::after{content:"";position:absolute;bottom:0;left:8px;width:61px;height:3px;background:#76b9ed}
.apps .active{background:#505d69;width:73px;margin-left:2px;padding-right:3px}
.apps .active::after{left:0;width:73px}
.weather{margin-left:68px;margin-top:-3px}
.temp{margin-left:13px;width:65px;font-size:20px;margin-top:4px}
.lang{margin-left:12px;width:53px;font-size:17px;letter-spacing:-.3px;margin-top:1px}
.datetime{width:96px;display:flex;flex-direction:column;align-items:center;font-size:17px;line-height:28px;letter-spacing:-.1px;white-space:nowrap;padding-left:1px}
.notif{margin-left:auto;margin-right:30px}
.peek{width:1px;height:60px;background:#7b8494;margin-right:6px}
```
